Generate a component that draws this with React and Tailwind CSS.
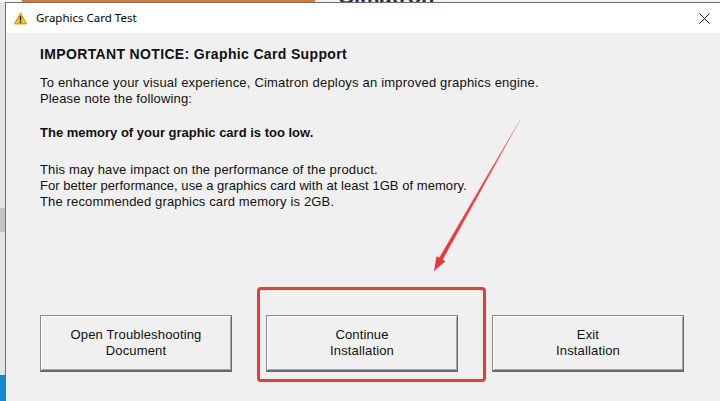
// インストーラの「Graphics Card Test」ダイアログ（注釈の赤枠・矢印つき）
const ui = { fontFamily: '"Liberation Sans", Arial, sans-serif' };
const title = { fontFamily: '"Noto Sans", "Open Sans", sans-serif' };

function WarnIcon() {
  return (
    <svg width="13" height="13" viewBox="0 0 14 13" className="shrink-0">
      <path d="M7 0.6 L13.5 12.4 L0.5 12.4 Z" fill="#f5c518" stroke="#a87b00" strokeWidth="0.8" strokeLinejoin="round" />
      <rect x="6.2" y="4" width="1.6" height="4.8" fill="#1a1a1a" />
      <rect x="6.2" y="9.8" width="1.6" height="1.6" fill="#1a1a1a" />
    </svg>
  );
}

function DlgButton({ children }) {
  return (
    <button
      className="w-[192px] h-[57px] bg-[#f0f0f0] border border-[#8a8a8a] border-r-[#696969] border-b-2 border-b-[#696969] shadow-[inset_1px_1px_0_#ffffff,inset_-1px_-1px_0_#a8a8a8] text-[13px] tracking-[0.15px] leading-4 text-[#111] flex flex-col items-center justify-center"
      style={ui}
    >
      {children}
    </button>
  );
}

export default function App() {
  return (
    <div className="w-[720px] h-[401px] relative overflow-hidden bg-[#e8e8e8] flex flex-col">
      {/* 背景アプリの切れ端 */}
      <div className="h-[2px] flex shrink-0 overflow-hidden">
        <div className="w-[22px] bg-[#f4f4f4]" />
        <div className="w-[293px] bg-[#e07a2a]" />
        <div className="flex-1 bg-[#f2f2f2] relative overflow-hidden">
          <span className="absolute left-[23px] -top-[20px] text-[22px] font-bold text-[#333]" style={ui}>Cimatron</span>
        </div>
      </div>

      <div className="flex flex-1 min-h-0">
        {/* 左端の背景 */}
        <div className="w-[5px] flex flex-col bg-[#e4e4e4]">
          <div className="h-[206px]" />
          <div className="h-[24px] bg-[#c4c4c4]" />
          <div className="flex-1" />
          <div className="h-[26px] bg-[#1487d0]" />
        </div>

        {/* ダイアログ本体 */}
        <div className="flex-1 flex flex-col border-l border-t border-[#6f6f6f]">
          <div className="h-[30px] bg-white flex items-center pl-[8px] pr-[10px] gap-[9px]">
            <WarnIcon />
            <span className="text-[11.5px] text-black flex-1" style={title}>Graphics Card Test</span>
            <svg width="11" height="11" viewBox="0 0 11 11">
              <path d="M0.5 0.5 L10.5 10.5 M10.5 0.5 L0.5 10.5" stroke="#222" strokeWidth="1" />
            </svg>
          </div>

          <div className="flex-1 bg-[#f0f0f0] pl-[34px] pt-[13px] text-[13px] tracking-[0.15px] leading-4 text-[#111]" style={ui}>
            <p className="font-bold text-[14px] tracking-[0.35px]">IMPORTANT NOTICE: Graphic Card Support</p>
            <p className="mt-[13px] tracking-[0.2px]">To enhance your visual experience, Cimatron deploys an improved graphics engine.</p>
            <p>Please note the following:</p>
            <p className="mt-[18px] font-bold tracking-normal">The memory of your graphic card is too low.</p>
            <p className="mt-[21px]">This may have impact on the performance of the product.</p>
            <p className="tracking-[0.05px]">For better performance, use a graphics card with at least 1GB of memory.</p>
            <p>The recommended graphics card memory is 2GB.</p>

            <div className="mt-[105px] flex gap-[34px]">
              <DlgButton>
                <span>Open Troubleshooting</span>
                <span>Document</span>
              </DlgButton>
              <DlgButton>
                <span>Continue</span>
                <span>Installation</span>
              </DlgButton>
              <DlgButton>
                <span>Exit</span>
                <span>Installation</span>
              </DlgButton>
            </div>
          </div>
        </div>
      </div>

      {/* 注釈：赤枠と矢印 */}
      <div className="absolute left-[257px] top-[287px] w-[229px] h-[95px] border-[3px] border-[#ec3b3b] rounded-[4px]" />
      <svg className="absolute inset-0 pointer-events-none" width="720" height="401">
        <defs>
          <linearGradient id="arr" x1="520" y1="120" x2="434" y2="271" gradientUnits="userSpaceOnUse">
            <stop offset="0" stopColor="#f7a0a0" />
            <stop offset="0.35" stopColor="#ee4a48" />
            <stop offset="1" stopColor="#ea3433" />
          </linearGradient>
        </defs>
        <polygon
          points="520.3,120.1 442.6,259.8 445.3,261.3 434,271 436.6,256.3 439.2,257.8 519.7,119.9"
          fill="url(#arr)"
        />
      </svg>
    </div>
  );
}
